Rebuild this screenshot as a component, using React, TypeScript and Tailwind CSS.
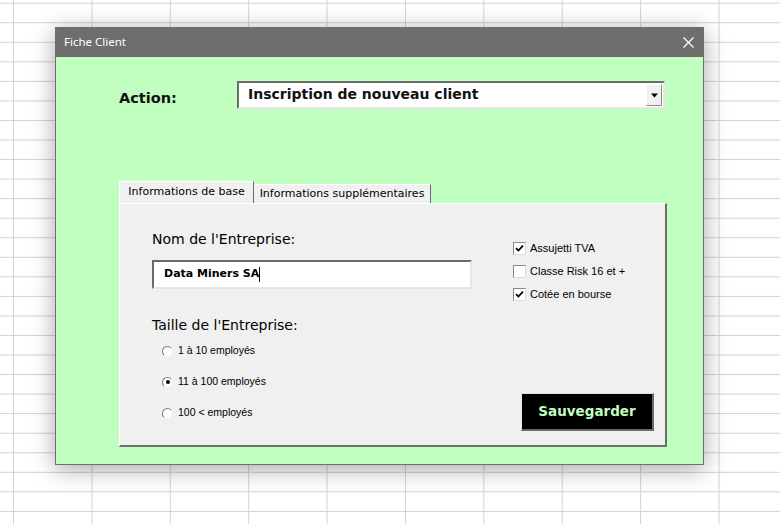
import React from 'react';

const tahoma = "font-['DejaVu_Sans',sans-serif]";
const sans = "font-['Liberation_Sans',Arial,sans-serif]";

function CheckBox({ checked, label }: { checked: boolean; label: string }) {
  return (
    <div className="flex items-center h-[16px] gap-[4px]">
      <div className="w-[13px] h-[13px] bg-white border border-t-[#8a8a8a] border-l-[#8a8a8a] border-r-[#dcdcdc] border-b-[#dcdcdc] flex items-center justify-center">
        {checked && (
          <svg width="9" height="9" viewBox="0 0 9 9">
            <path d="M1 4.2 L3.4 6.6 L8 1.6" fill="none" stroke="#000" strokeWidth="1.7" />
          </svg>
        )}
      </div>
      <span className={`${sans} text-[11px] text-black`}>{label}</span>
    </div>
  );
}

function Radio({ checked, label }: { checked: boolean; label: string }) {
  return (
    <div className="flex items-center h-[20px] gap-[5px] ml-[10px]">
      <div className="w-[11px] h-[11px] rounded-full bg-white border border-t-[#7a7a7a] border-l-[#7a7a7a] border-r-[#eeeeee] border-b-[#eeeeee] flex items-center justify-center">
        {checked && <div className="w-[4px] h-[4px] rounded-full bg-black" />}
      </div>
      <span className={`${sans} text-[10.5px] text-black`}>{label}</span>
    </div>
  );
}

export default function App() {
  return (
    <div className="relative w-[780px] h-[524px] overflow-hidden bg-white bg-[linear-gradient(to_right,#d2d2d2_1px,transparent_1px),linear-gradient(to_bottom,#d2d2d2_1px,transparent_1px)] bg-size-[78.4px_19.55px] bg-position-[13px_2.7px]">
      {/* UserForm window */}
      <div className="absolute left-[55px] top-[27px] w-[649px] h-[438px] flex flex-col border border-[#6e6e6e] shadow-[0_4px_22px_rgba(0,0,0,0.35)]">
        {/* Title bar */}
        <div className="h-[29px] shrink-0 bg-[#6e6e6e] flex items-center justify-between pl-[8px] pr-[9px]">
          <span className="font-['Noto_Sans',sans-serif] text-[11.5px] text-white pb-[1px]">Fiche Client</span>
          <svg width="11" height="11" viewBox="0 0 11 11">
            <path d="M0.5 0.5 L10.5 10.5 M10.5 0.5 L0.5 10.5" stroke="#fff" strokeWidth="1.2" />
          </svg>
        </div>

        {/* Body */}
        <div className="flex-1 bg-[#c0ffc0] pl-[63px] pt-[24px]">
          {/* Action row */}
          <div className="flex items-center h-[28px]">
            <div className={`${tahoma} w-[118px] pt-[7px] text-[14.5px] font-bold text-[#111]`}>Action:</div>
            <div className="w-[428px] h-[28px] bg-white flex items-center border-2 border-t-[#6a6a6a] border-l-[#6a6a6a] border-r-[#e6e6e6] border-b-[#e6e6e6]">
              <span className={`${tahoma} flex-1 pl-[9px] pb-[2px] text-[14px] font-bold text-[#111]`}>Inscription de nouveau client</span>
              <div className="w-[16px] h-[22px] mr-[1px] bg-[#f0f0f0] border border-t-[#fff] border-l-[#fff] border-r-[#8a8a8a] border-b-[#8a8a8a] flex items-center justify-center">
                <svg width="7" height="5" viewBox="0 0 7 5">
                  <path d="M0 0.5 H7 L3.5 4.5 Z" fill="#000" />
                </svg>
              </div>
            </div>
          </div>

          {/* Tab strip */}
          <div className="mt-[72px] flex items-end h-[22px]">
            <div className="h-[22px] w-[135px] bg-[#f0f0f0] border-t border-l border-t-white border-l-white border-r border-r-[#6a6a6a] flex items-center justify-center">
              <span className={`${tahoma} text-[11px] text-black pb-[1px]`}>Informations de base</span>
            </div>
            <div className="h-[19px] w-[177px] bg-[#f0f0f0] border-t border-t-white border-r border-r-[#6a6a6a] flex items-center justify-center">
              <span className={`${tahoma} text-[11px] text-black`}>Informations supplémentaires</span>
            </div>
          </div>

          {/* Tab page */}
          <div className="w-[548px] h-[244px] bg-[#f0f0f0] border-t border-l border-t-white border-l-white border-r-2 border-b-2 border-r-[#6e6e6e] border-b-[#6e6e6e] flex">
            <div className="w-[393px] pl-[32px] pt-[25px] flex flex-col">
              <div className={`${tahoma} h-[20px] leading-[20px] text-[14px] text-black`}>Nom de l'Entreprise:</div>
              <div className="mt-[11px] w-[320px] h-[29px] bg-white flex items-center border-2 border-t-[#6a6a6a] border-l-[#6a6a6a] border-r-[#e6e6e6] border-b-[#e6e6e6] pl-[10px]">
                <span className={`${tahoma} text-[11px] font-bold text-black`}>Data Miners SA</span>
                <span className="w-[1px] h-[15px] bg-black" />
              </div>
              <div className={`${tahoma} mt-[26px] h-[20px] leading-[20px] text-[14px] text-black`}>Taille de l'Entreprise:</div>
              <div className="mt-[6px] flex flex-col gap-[11px]">
                <Radio checked={false} label="1 à 10 employés" />
                <Radio checked={true} label="11 à 100 employés" />
                <Radio checked={false} label="100 < employés" />
              </div>
            </div>
            <div className="flex-1 pt-[36px] flex flex-col">
              <div className="flex flex-col gap-[7px]">
                <CheckBox checked={true} label="Assujetti TVA" />
                <CheckBox checked={false} label="Classe Risk 16 et +" />
                <CheckBox checked={true} label="Cotée en bourse" />
              </div>
              <div className="mt-[91px] ml-[8px] w-[133px] h-[38px] bg-black border border-t-[#e3e3e3] border-l-[#e3e3e3] border-r-2 border-b-2 border-r-[#6a6a6a] border-b-[#6a6a6a] flex items-center justify-center">
                <span className={`${tahoma} text-[13.5px] font-bold text-[#c0ffc0]`}>Sauvegarder</span>
              </div>
            </div>
          </div>
        </div>
      </div>
    </div>
  );
}
